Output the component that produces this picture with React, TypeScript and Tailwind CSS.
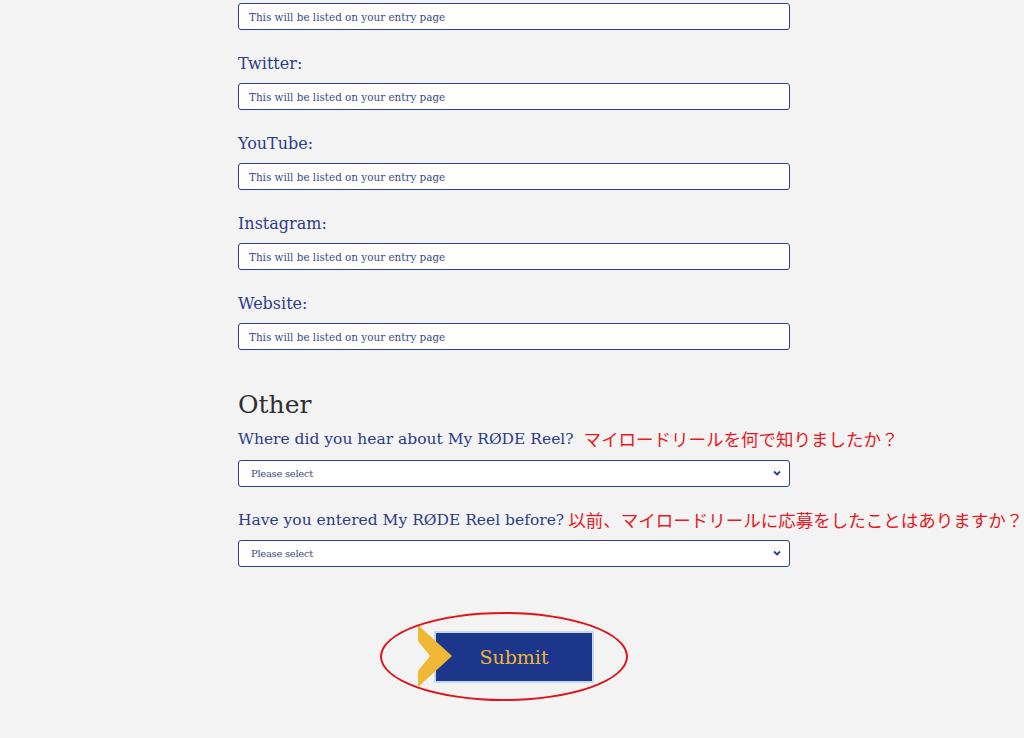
const slab = "font-['DejaVu_Serif',serif]";
const jp = "font-['Noto_Sans_CJK_JP','Noto_Sans',sans-serif]";

const socials = ["Twitter:", "YouTube:", "Instagram:", "Website:"];

function TextField() {
  return (
    <input
      type="text"
      placeholder="This will be listed on your entry page"
      className={`${slab} h-[27px] w-full rounded-[3px] border border-[#2c3e8c] bg-white px-[10px] text-[10.4px] text-[#34478a] placeholder:text-[#3a4986] outline-none`}
    />
  );
}

function SelectField() {
  return (
    <div className="relative h-[27px] w-full">
      <select
        defaultValue=""
        className={`${slab} h-full w-full appearance-none rounded-[3px] border border-[#2c3e8c] bg-white px-[12px] text-[10px] tracking-[-0.3px] text-[#3d4c86] outline-none`}
      >
        <option value="">Please select</option>
      </select>
      <svg
        className="pointer-events-none absolute right-[9px] top-[11px]"
        width="8"
        height="6"
        viewBox="0 0 8 6"
      >
        <path d="M1 1.5 L4 4.5 L7 1.5" fill="none" stroke="#2c3e8c" strokeWidth="1.8" />
      </svg>
    </div>
  );
}

export default function App() {
  return (
    <div className="min-h-[738px] w-full bg-[#f3f3f3]">
      <div className="ml-[238px] flex w-[552px] flex-col pt-[3px]">
        <TextField />

        {socials.map((label) => (
          <div key={label} className="flex flex-col">
            <label className={`${slab} mt-[24px] mb-[9px] h-[20px] text-[16px] leading-[20px] text-[#2b3c8a]`}>
              {label}
            </label>
            <TextField />
          </div>
        ))}

        {/* Other */}
        <h2 className={`${slab} mt-[39px] h-[32px] text-[25px] leading-[32px] text-[#2f2f2f]`}>Other</h2>

        <div className="mt-[8px] mb-[10px] flex h-[20px] items-center whitespace-nowrap">
          <span className={`${slab} text-[15.5px] leading-[20px] text-[#2b3c8a]`}>
            Where did you hear about My RØDE Reel?
          </span>
          <span className={`${jp} ml-[10px] text-[17.5px] leading-[20px] text-[#e51a22]`}>
            マイロードリールを何で知りましたか？
          </span>
        </div>
        <SelectField />

        <div className="mt-[24px] mb-[9px] flex h-[20px] items-center whitespace-nowrap">
          <span className={`${slab} text-[15.5px] leading-[20px] text-[#2b3c8a]`}>
            Have you entered My RØDE Reel before?
          </span>
          <span className={`${jp} ml-[4px] text-[17.5px] leading-[20px] text-[#e51a22]`}>
            以前、マイロードリールに応募をしたことはありますか？
          </span>
        </div>
        <SelectField />

        {/* Submit */}
        <div className="mt-[65px] flex justify-center">
          <div className="relative">
            <button
              className={`${slab} h-[52px] w-[160px] border-2 border-[#c8d8ec] bg-[#1c368b] text-[19px] text-[#efb534]`}
            >
              Submit
            </button>
            <svg
              className="absolute left-[-16px] top-[-6px]"
              width="34"
              height="62"
              viewBox="0 0 34 62"
            >
              <polygon points="0,0 34,31 0,62 0,46 12,31 0,16" fill="#efb834" />
            </svg>
            {/* annotation ellipse */}
            <div className="pointer-events-none absolute left-[-54px] top-[-19px] h-[89px] w-[248px] rounded-[50%] border-2 border-[#e0141c]" />
          </div>
        </div>
      </div>
    </div>
  );
}
